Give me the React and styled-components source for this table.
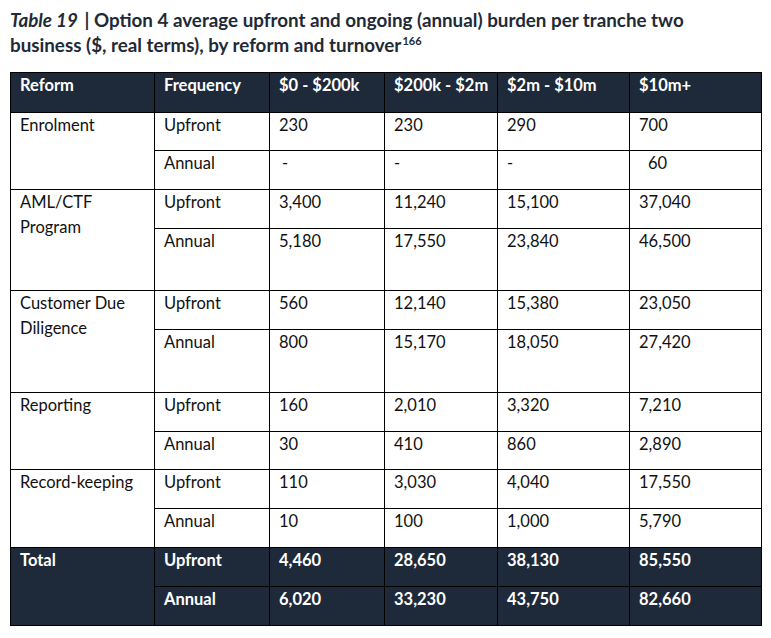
import React from "react";
import styled, { createGlobalStyle } from "styled-components";

const Global = createGlobalStyle`
  html, body { margin: 0; padding: 0; background: #fff; }
  body { font-family: Lato, "Open Sans", sans-serif; }
`;

const Page = styled.div`
  width: 771px;
  padding: 7px 10px 0 10px;
  box-sizing: border-box;
`;

const Title = styled.h1`
  margin: 0 0 15px 0;
  font-size: 18.8px;
  line-height: 25px;
  font-weight: 700;
  color: #1f2a37;
  width: 705px;
`;

const Em = styled.em`
  font-style: italic;
  margin-right: 2px;
`;

const Sup = styled.sup`
  font-size: 11px;
  line-height: 0;
  vertical-align: 7px;
  margin-left: 1px;
`;

const Table = styled.table`
  border-collapse: collapse;
  width: 751px;
  table-layout: fixed;
  font-size: 16.5px;
  line-height: 24.5px;
  color: #111;
`;

const Cell = styled.td`
  border: 1px solid #000;
  padding: 0 0 0 ${(p) => 9 + (p.$indent || 0)}px;
  vertical-align: top;
  height: ${(p) => p.$h || 38}px;
  box-sizing: border-box;
  background: ${(p) => (p.$dark ? "#1e2a3a" : "#fff")};
  color: ${(p) => (p.$dark ? "#fff" : "#111")};
  font-weight: ${(p) => (p.$dark ? 700 : 400)};
  white-space: pre-wrap;
`;

const Head = styled.th`
  border: 1px solid #000;
  padding: 0 0 0 9px;
  vertical-align: top;
  height: 39px;
  text-align: left;
  background: #1e2a3a;
  color: #fff;
  font-weight: 700;
`;

const cols = [144, 115, 115, 113, 132, 132];
const headers = ["Reform", "Frequency", "$0 - $200k", "$200k - $2m", "$2m - $10m", "$10m+"];

const groups = [
  {
    name: "Enrolment",
    rows: [
      { f: "Upfront", v: ["230", "230", "290", "700"], h: 38 },
      { f: "Annual", v: ["-", "-", "-", "60"], ind: [3, 0, 0, 9], h: 39 },
    ],
  },
  {
    name: "AML/CTF Program",
    rows: [
      { f: "Upfront", v: ["3,400", "11,240", "15,100", "37,040"], h: 39 },
      { f: "Annual", v: ["5,180", "17,550", "23,840", "46,500"], h: 62 },
    ],
  },
  {
    name: "Customer Due Diligence",
    rows: [
      { f: "Upfront", v: ["560", "12,140", "15,380", "23,050"], h: 39 },
      { f: "Annual", v: ["800", "15,170", "18,050", "27,420"], h: 63 },
    ],
  },
  {
    name: "Reporting",
    rows: [
      { f: "Upfront", v: ["160", "2,010", "3,320", "7,210"], h: 39 },
      { f: "Annual", v: ["30", "410", "860", "2,890"], h: 38 },
    ],
  },
  {
    name: "Record-keeping",
    rows: [
      { f: "Upfront", v: ["110", "3,030", "4,040", "17,550"], h: 39 },
      { f: "Annual", v: ["10", "100", "1,000", "5,790"], h: 39 },
    ],
  },
  {
    name: "Total",
    dark: true,
    rows: [
      { f: "Upfront", v: ["4,460", "28,650", "38,130", "85,550"], h: 39 },
      { f: "Annual", v: ["6,020", "33,230", "43,750", "82,660"], h: 39 },
    ],
  },
];

export default function App() {
  return (
    <Page>
      <Global />
      <Title>
        <Em>Table 19</Em> | Option 4 average upfront and ongoing (annual) burden per tranche two
        business ($, real terms), by reform and turnover<Sup>166</Sup>
      </Title>
      <Table>
        <colgroup>
          {cols.map((w, i) => (
            <col key={i} style={{ width: w }} />
          ))}
        </colgroup>
        <thead>
          <tr>
            {headers.map((h) => (
              <Head key={h}>{h}</Head>
            ))}
          </tr>
        </thead>
        <tbody>
          {groups.map((g) =>
            g.rows.map((r, ri) => (
              <tr key={g.name + r.f}>
                {ri === 0 && (
                  <Cell rowSpan={g.rows.length} $dark={g.dark}>
                    {g.name}
                  </Cell>
                )}
                <Cell $dark={g.dark} $h={r.h}>
                  {r.f}
                </Cell>
                {r.v.map((v, vi) => (
                  <Cell key={vi} $dark={g.dark} $h={r.h} $indent={r.ind ? r.ind[vi] : 0}>
                    {v}
                  </Cell>
                ))}
              </tr>
            ))
          )}
        </tbody>
      </Table>
    </Page>
  );
}
